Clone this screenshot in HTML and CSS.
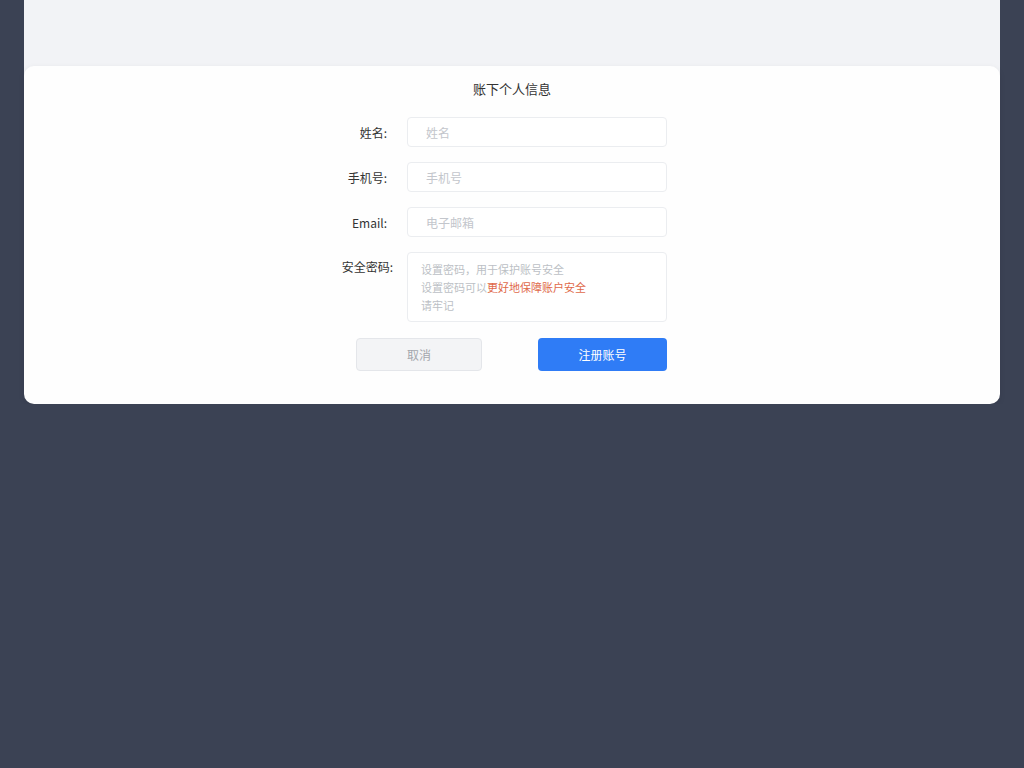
FILE: index.html
```html
<!DOCTYPE html>
<html lang="zh-CN">
<head>
    <meta charset="UTF-8">
    <meta name="viewport" content="width=device-width, initial-scale=1.0">
    <title>个人信息</title>
    <link rel="stylesheet" href="styles.css">
</head>
<body>

    <div class="shell">
        <div class="shell-top"></div>

        <div class="card">
            <h2 class="card-title">账下个人信息</h2>

            <form class="info-form" id="infoForm">
                <!-- 姓名 -->
                <label for="name">姓名:</label>
                <input type="text" id="name" placeholder="姓名">

                <!-- 手机号 -->
                <label for="phone">手机号:</label>
                <input type="text" id="phone" placeholder="手机号">

                <!-- Email -->
                <label for="email">Email:</label>
                <input type="email" id="email" placeholder="电子邮箱">

                <!-- 安全密码 -->
                <label class="label-top">安全密码:</label>
                <div class="hint-box">
                    <p>设置密码，用于保护账号安全</p>
                    <p>设置密码可以<span class="warn">更好地保障账户安全</span></p>
                    <p>请牢记</p>
                </div>

                <!-- 按钮 -->
                <div class="actions">
                    <button type="button" class="btn btn-cancel">取消</button>
                    <button type="submit" class="btn btn-primary">注册账号</button>
                </div>
            </form>
        </div>
    </div>

</body>
</html>
```

FILE: styles.css
```css
body {
    margin: 0;
    background: #3b4254;
    font-family: "Noto Sans CJK SC", "Noto Sans", sans-serif;
    color: #333;
}
.shell {
    margin: 0 24px;
}
.shell-top {
    height: 76px;
    background: #f2f3f6;
}
.card {
    position: relative;
    margin-top: -10px;
    background: #fefefe;
    border-radius: 10px;
    padding: 13px 0 33px;
    box-shadow: 0 2px 6px rgba(0, 0, 0, 0.08);
}
.card-title {
    margin: 0 0 18px;
    font-size: 13px;
    font-weight: normal;
    line-height: 20px;
    text-align: center;
    color: #333;
}
.info-form {
    width: 360px;
    padding-right: 50px;
    margin: 0 auto;
    display: grid;
    grid-template-columns: 80px 260px;
    column-gap: 20px;
    row-gap: 15px;
    align-items: center;
}
label {
    font-size: 12px;
    text-align: right;
    color: #333;
    white-space: nowrap;
}
.label-top {
    align-self: start;
    padding-top: 6px;
    margin-right: -6px;
}
input {
    box-sizing: border-box;
    height: 30px;
    width: 100%;
    padding: 0 18px;
    border: 1px solid #ebedf0;
    border-radius: 4px;
    font-family: inherit;
    font-size: 12px;
    color: #333;
    background: #fff;
    outline: none;
}
input::placeholder {
    color: #c3c6cc;
}
.hint-box {
    box-sizing: border-box;
    height: 70px;
    padding: 7px 13px;
    border: 1px solid #ebedf0;
    border-radius: 4px;
    background: #fff;
    font-size: 11px;
    color: #bcbfc5;
}
.hint-box p {
    margin: 0;
    line-height: 18px;
}
.warn {
    color: #e0694a;
}
.actions {
    grid-column: 1 / -1;
    display: flex;
    justify-content: space-between;
    padding-left: 49px;
    margin-top: 1px;
}
.btn {
    height: 33px;
    border-radius: 4px;
    font-family: inherit;
    font-size: 12px;
    cursor: pointer;
}
.btn-cancel {
    width: 126px;
    background: #f3f4f6;
    border: 1px solid #e4e6ea;
    color: #a4a7ad;
}
.btn-primary {
    width: 129px;
    background: #2f7cf6;
    border: none;
    color: #fff;
}
```
